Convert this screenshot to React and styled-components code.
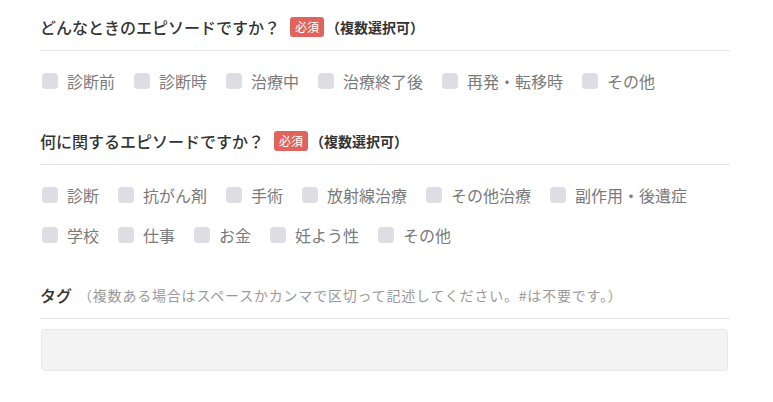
import styled, { createGlobalStyle } from "styled-components"

const GlobalStyle = createGlobalStyle`
  body {
    margin: 0;
    background: #ffffff;
    font-family: "Noto Sans CJK JP", "Noto Sans", sans-serif;
  }
`;

const Page = styled.div`
  padding: 15px 43px 0 40px;
`;

const Section = styled.section`
  margin-bottom: 28px;
`;

const Heading = styled.div`
  display: flex;
  align-items: center;
  height: 24px;
  padding-bottom: 11px;
  border-bottom: 1px solid #e4e4e4;
  color: #333;
  font-size: 16px;
  font-weight: 500;
`;

const Badge = styled.span`
  margin-left: 10px;
  padding: 0 5px;
  height: 20px;
  line-height: 20px;
  border-radius: 3px;
  background: #e0645d;
  color: #fff;
  font-size: 12px;
  font-weight: normal;
`;

const Note = styled.span`
  margin-left: ${(p) => (p.$muted ? "6px" : "2px")};
  font-size: 14px;
  letter-spacing: ${(p) => (p.$muted ? "0.8px" : "0")};
  font-weight: ${(p) => (p.$muted ? "normal" : "bold")};
  color: ${(p) => (p.$muted ? "#9a9a9a" : "#333")};
`;

const Options = styled.div`
  display: flex;
  flex-wrap: wrap;
  column-gap: 19px;
  padding: 10px 0 0 2px;
`;

const Option = styled.label`
  display: flex;
  align-items: center;
  height: 40px;
  color: #7a7a7a;
  font-size: 16px;
  cursor: pointer;
`;

const Box = styled.span`
  width: 16px;
  height: 16px;
  margin-right: 9px;
  border-radius: 4px;
  background: #dddde3;
`;

const TagInput = styled.div`
  margin: 10px 2px 0 1px;
  height: 40px;
  border: 1px solid #e8e8e8;
  border-radius: 4px;
  background: #f3f3f3;
`;

const when = ["診断前", "診断時", "治療中", "治療終了後", "再発・転移時", "その他"];
const about = ["診断", "抗がん剤", "手術", "放射線治療", "その他治療", "副作用・後遺症", "学校", "仕事", "お金", "妊よう性", "その他"];

function Checks({ items }) {
  return (
    <Options>
      {items.map((t, i) => (
        <Option key={i}>
          <Box />
          {t}
        </Option>
      ))}
    </Options>
  );
}

export default function App() {
  return (
    <Page>
      <GlobalStyle />
      <Section>
        <Heading>
          どんなときのエピソードですか？
          <Badge>必須</Badge>
          <Note>（複数選択可）</Note>
        </Heading>
        <Checks items={when} />
      </Section>
      <Section>
        <Heading>
          何に関するエピソードですか？
          <Badge>必須</Badge>
          <Note>（複数選択可）</Note>
        </Heading>
        <Checks items={about} />
      </Section>
      <Section>
        <Heading>
          タグ
          <Note $muted>（複数ある場合はスペースかカンマで区切って記述してください。#は不要です。）</Note>
        </Heading>
        <TagInput />
      </Section>
    </Page>
  );
}
